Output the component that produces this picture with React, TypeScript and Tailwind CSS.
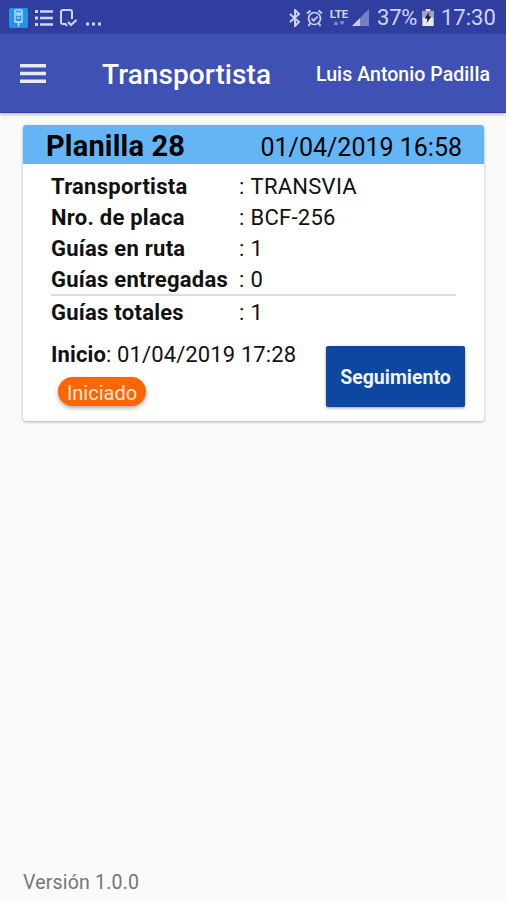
import React from "react";

type RowProps = { label: string; value: string };

function Row({ label, value }: RowProps) {
  return (
    <div className="flex h-[31px] items-center text-[22px] leading-[31px] tracking-[0.250px] text-[#111]">
      <span className="w-[188px] font-bold">{label}</span>
      <span className="whitespace-nowrap">
        :<span className="ml-[6px]">{value}</span>
      </span>
    </div>
  );
}

function StatusBar() {
  return (
    <div className="flex h-[34px] items-center bg-[#303f9f] pt-[2px] pr-[11px] pl-[9px] text-[#cfd5f5]">
      <svg width="19" height="20" viewBox="0 0 19 20" className="shrink-0">
        <rect width="19" height="20" rx="2" fill="#2494ea" />
        <g fill="none" stroke="#b9dcfb" strokeWidth="1.5">
          <rect x="6" y="2" width="7" height="12" rx="1" />
          <path d="M8 5h3v2H8zM8 10h3M9.5 14V18.500M5.5 14h8" />
        </g>
      </svg>
      <svg width="18" height="18" viewBox="0 0 18 18" className="ml-[7px] shrink-0" fill="currentColor">
        <path d="M0 1h3v3H0zM0 7.5h3v3H0zM0 14h3v3H0zM5 1.200h13v2.500H5zM5 7.700h13v2.500H5zM5 14.200h13v2.500H5z" />
      </svg>
      <svg width="17" height="18" viewBox="0 0 17 18" className="ml-[7px] shrink-0" fill="none" stroke="currentColor" strokeWidth="2">
        <path d="M12 10V3q0-2-2-2H3Q1 1 1 3v10q0 2 2 2h2.500l1.500 2" />
        <path d="M8 13l3 3 5.500-5" />
      </svg>
      <svg width="15" height="4" viewBox="0 0 15 4" className="mt-[11px] ml-[9px] shrink-0" fill="currentColor">
        <path d="M0 .5h3v3H0zM6 .5h3v3H6zM12 .5h3v3h-3z" />
      </svg>
      <div className="ml-auto flex items-center">
        <svg width="12" height="18" viewBox="0 0 12 18" fill="none" stroke="currentColor" strokeWidth="1.900">
          <path d="M1 5l9 8-4 4V1l4 4-9 8" />
        </svg>
        <svg width="17" height="18" viewBox="0 0 17 18" className="ml-[5px]" fill="none" stroke="currentColor" strokeWidth="1.700">
          <circle cx="8.500" cy="9.500" r="6" />
          <path d="M1 4.500L4.500 1.500M16 4.500L12.500 1.500M5.500 9.500l2.200 2.200 4-4.200M4 14.500L2.500 17M13 14.500L14.500 17" />
        </svg>
        <div className="ml-[6px] flex h-[18px] w-[20px] flex-col items-center">
          <span className="text-[11.500px] leading-[11px] font-bold">LTE</span>
          <svg width="12" height="5" viewBox="0 0 12 5" fill="#7784c9" className="mt-px">
            <path d="M1 2l2-2 2 2v2H1zM7 0h4v2L9 4 7 2z" />
          </svg>
        </div>
        <svg width="17" height="17" viewBox="0 0 17 17" className="-mt-px ml-[3px]">
          <path d="M0 17L17 0v17z" fill="#7481c6" />
          <path d="M0 17l8-8v8z" fill="#c5ccf2" />
        </svg>
        <span className="ml-[8px] w-[41px] text-[22px] leading-[32px] tracking-[-0.200px] whitespace-nowrap">37%</span>
        <svg width="12" height="17" viewBox="0 0 12 18" className="-mt-px ml-[4px]">
          <path d="M3.500 0h5v2H12v16H0V2h3.500z" fill="#e8e8f0" />
          <path d="M0 2h12v7H0z" fill="#9da3c6" />
          <path d="M7.500 3L2.500 10h3L4.500 15l5-7h-3z" fill="#15151c" />
        </svg>
        <span className="ml-[7px] w-[54px] text-[22px] leading-[32px] whitespace-nowrap">17:30</span>
      </div>
    </div>
  );
}

export default function App() {
  return (
    <div className="flex h-[900px] w-[506px] flex-col overflow-hidden bg-[#fafafa] font-[Roboto,sans-serif]">
      <StatusBar />
      <header className="flex h-[79px] shrink-0 items-center border-b border-[#2f43a6] bg-[#3f51b5] pt-[3px] pr-[16px] pl-[20px] text-white shadow-[0_2px_3px_rgba(0,0,0,0.22)]">
        <svg width="26" height="19" viewBox="0 0 26 19" fill="#e8eaf8" className="-mt-[2px]">
          <path d="M0 0h26v3.500H0zM0 7.750h26v3.500H0zM0 15.500h26V19H0z" />
        </svg>
        <h1 className="ml-[56px] text-[28px] font-medium tracking-[0.080px] whitespace-nowrap">Transportista</h1>
        <span className="ml-auto text-[19.500px] font-medium tracking-[0.060px] whitespace-nowrap">Luis Antonio Padilla</span>
      </header>

      <main className="mx-[23px] mt-[12px] mr-[22px] h-[296px] shrink-0 overflow-hidden rounded-[3px] bg-white shadow-[0_1px_3px_rgba(0,0,0,0.32)]">
        <div className="flex h-[39px] items-center justify-between bg-[#64b5f6] pr-[22px] pl-[23px] text-black">
          <h2 className="mt-[2px] text-[29px] leading-[36px] font-bold tracking-[0.180px]">Planilla 28</h2>
          <span className="mt-[6px] text-[25px] leading-[34px]">01/04/2019 16:58</span>
        </div>
        <div className="pt-[7px] pr-[19px] pl-[28px]">
          <Row label="Transportista" value="TRANSVIA" />
          <Row label="Nro. de placa" value="BCF-256" />
          <Row label="Guías en ruta" value="1" />
          <div className="mr-[9px] h-[32px] border-b-2 border-[#dcdcdc]">
            <Row label="Guías entregadas" value="0" />
          </div>
          <div className="pt-px">
            <Row label="Guías totales" value="1" />
          </div>
          <div className="mt-[18px] flex justify-between">
            <div>
              <p className="-mt-[7px] h-[31px] text-[22px] leading-[31px] tracking-[0.120px] whitespace-nowrap text-[#111]">
                <b>Inicio</b>: 01/04/2019 17:28
              </p>
              <div className="mt-[7px] ml-[7px] flex h-[29px] w-[88px] items-center justify-center rounded-full bg-[#ff6500] pt-[2px] text-[20px] text-[#ffe9dc] shadow-[0_2px_4px_rgba(0,0,0,0.35)]">
                Iniciado
              </div>
            </div>
            <button className="h-[61px] w-[139px] rounded-[2px] bg-[#0d47a1] pt-[3px] text-[19.500px] font-bold text-[#eff3fc] shadow-[0_1px_3px_rgba(0,0,0,0.4)]">
              Seguimiento
            </button>
          </div>
        </div>
      </main>

      <footer className="mt-auto h-[32px] pl-[23px] text-[19.500px] leading-[30px] tracking-[0.200px] text-[#757575]">Versión 1.0.0</footer>
    </div>
  );
}
